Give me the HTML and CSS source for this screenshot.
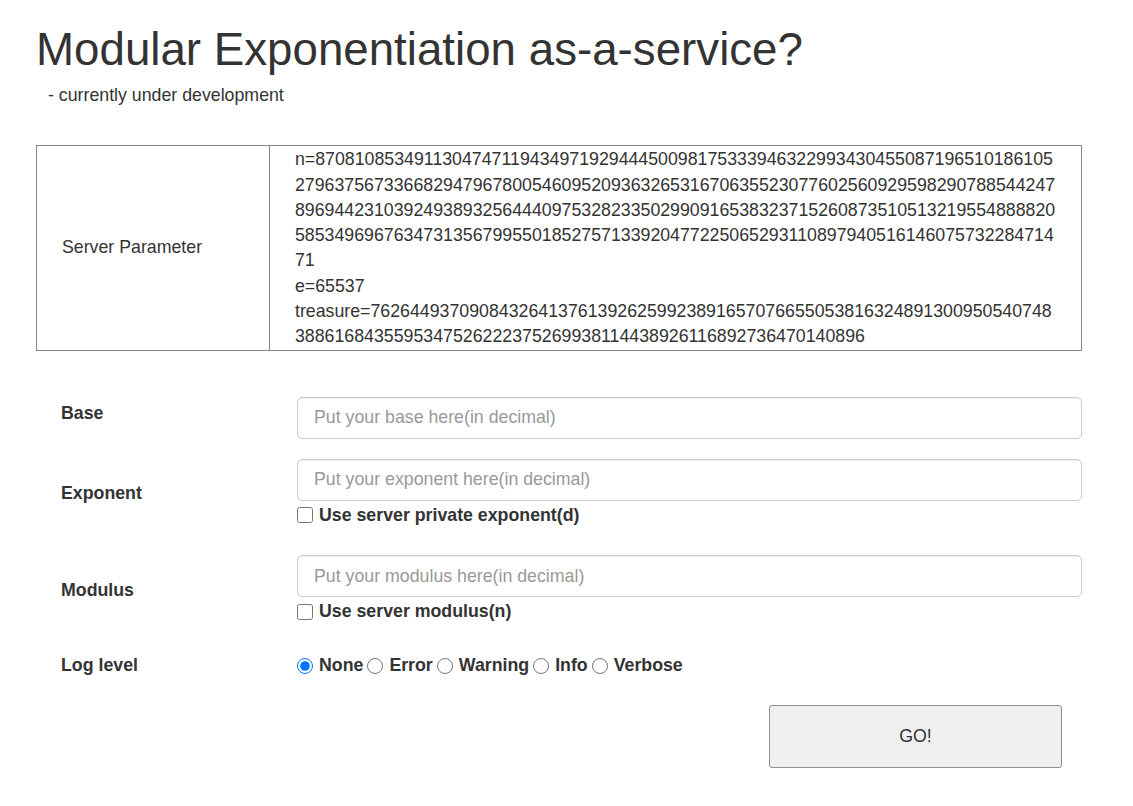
FILE: index.html
```html
<!DOCTYPE html>
<html lang="en">
<head>
<meta charset="utf-8">
<title>Modular Exponentiation as-a-service?</title>
<link rel="stylesheet" href="styles.css">
</head>
<body>
<div class="page">
  <h1 class="title">Modular Exponentiation as-a-service?</h1>
  <p class="subtitle">- currently under development</p>

  <div class="params">
    <div class="params-label">Server Parameter</div>
    <div class="params-value">n=87081085349113047471194349719294445009817533394632299343045508719651018610527963756733668294796780054609520936326531670635523077602560929598290788544247896944231039249389325644409753282335029909165383237152608735105132195548888205853496967634731356799550185275713392047722506529311089794051614607573228471471<br>e=65537<br>treasure=7626449370908432641376139262599238916570766550538163248913009505407483886168435595347526222375269938114438926116892736470140896</div>
  </div>

  <form class="form">
    <div class="row row-base">
      <label class="row-label" for="base">Base</label>
      <div class="row-field field-base">
        <input class="text-input" id="base" type="text" placeholder="Put your base here(in decimal)">
      </div>
    </div>

    <div class="row row-exp">
      <label class="row-label" for="exp">Exponent</label>
      <div class="row-field">
        <input class="text-input" id="exp" type="text" placeholder="Put your exponent here(in decimal)">
        <label class="check-line"><input class="check" type="checkbox"><span>Use server private exponent(d)</span></label>
      </div>
    </div>

    <div class="row row-mod">
      <label class="row-label" for="mod">Modulus</label>
      <div class="row-field">
        <input class="text-input" id="mod" type="text" placeholder="Put your modulus here(in decimal)">
        <label class="check-line"><input class="check" type="checkbox"><span>Use server modulus(n)</span></label>
      </div>
    </div>

    <div class="row row-log">
      <span class="row-label">Log level</span>
      <div class="row-field radios">
        <label class="radio-opt"><input class="radio" type="radio" name="log" checked><span>None</span></label>
        <label class="radio-opt"><input class="radio" type="radio" name="log"><span>Error</span></label>
        <label class="radio-opt"><input class="radio" type="radio" name="log"><span>Warning</span></label>
        <label class="radio-opt"><input class="radio" type="radio" name="log"><span>Info</span></label>
        <label class="radio-opt"><input class="radio" type="radio" name="log"><span>Verbose</span></label>
      </div>
    </div>

    <div class="actions">
      <button class="go" type="button">GO!</button>
    </div>
  </form>
</div>
</body>
</html>
```

FILE: styles.css
```css
* { box-sizing: border-box; }

html, body {
  margin: 0;
  padding: 0;
  background: #fff;
}

body {
  font-family: "Liberation Sans", Arial, Helvetica, sans-serif;
  font-size: 17.75px;
  line-height: 1.42857;
  color: #333;
}

.page {
  padding: 25px 0 30px 36px;
  width: 1082px;
}

.title {
  margin: 0 0 7px 0;
  font-size: 45.7px;
  font-weight: 500;
  line-height: 1.1;
  color: #333;
}

.subtitle {
  margin: 0 0 37px 0;
  padding-left: 12px;
  line-height: 26px;
}

.params {
  display: grid;
  grid-template-columns: 233px 1fr;
  width: 1046px;
  border: 1px solid #858585;
}

.params-label {
  display: flex;
  align-items: center;
  padding-left: 25px;
  border-right: 1px solid #858585;
}

.params-value {
  padding: 1px 22px 0 25px;
  word-break: break-all;
  line-height: 25.3px;
}

.form {
  margin-top: 39px;
  padding-left: 25px;
  width: 1046px;
}

.row {
  display: grid;
  grid-template-columns: 236px 785px;
  align-items: center;
}

.row-label {
  font-weight: 700;
}

.row-field {
  display: flex;
  flex-direction: column;
  align-items: flex-start;
}

.field-base {
  padding-top: 7px;
}

.row-exp { margin-top: 20px; }
.row-mod { margin-top: 27px; }
.row-log { margin-top: 28px; }

.text-input {
  width: 785px;
  height: 42px;
  padding: 0 16px;
  border: 1px solid #ccc;
  border-radius: 5px;
  box-shadow: inset 0 1px 1px rgba(0, 0, 0, 0.075);
  font-family: inherit;
  font-size: 17.75px;
  color: #555;
  background: #fff;
}

.text-input::placeholder {
  color: #999;
}

.check-line {
  display: flex;
  align-items: center;
  margin-top: 2px;
  font-weight: 700;
  line-height: 25.7px;
}

.check {
  width: 16px;
  height: 16px;
  margin: 0 6px 0 0;
}

.radios {
  flex-direction: row;
  align-items: center;
  font-weight: 700;
}

.radio-opt {
  display: flex;
  align-items: center;
  margin-right: 4px;
}

.radio {
  width: 16px;
  height: 16px;
  margin: 0 6px 0 0;
}

.actions {
  display: flex;
  justify-content: flex-end;
  margin-top: 27px;
  padding-right: 20px;
}

.go {
  width: 293px;
  height: 63px;
  background: #efefef;
  border: 1px solid #8f8f8f;
  border-radius: 3px;
  font-family: inherit;
  font-size: 17.75px;
  color: #333;
}
```
